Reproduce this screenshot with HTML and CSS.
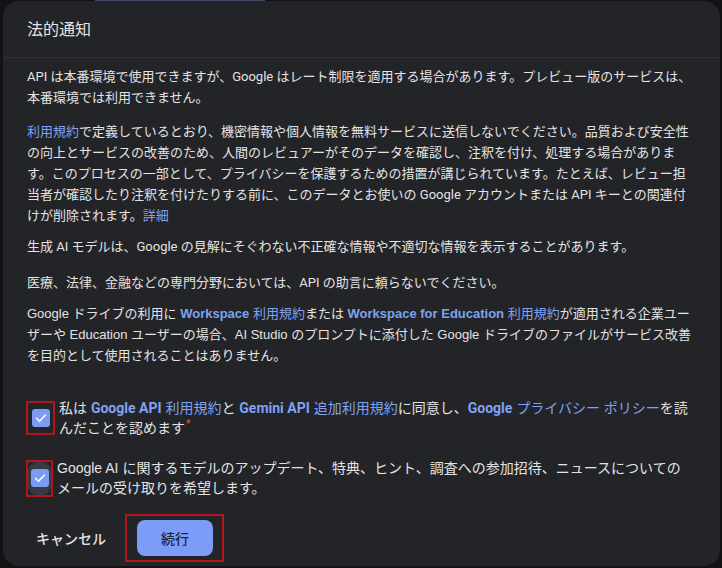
FILE: index.html
```html
<!DOCTYPE html>
<html lang="ja">
<head>
    <meta charset="UTF-8">
    <meta name="viewport" content="width=device-width, initial-scale=1.0">
    <title>法的通知</title>
    <link rel="stylesheet" href="styles.css">
</head>
<body>
    <div class="dialog">
        <!-- Cabecera -->
        <div class="dialog-header">
            <h2>法的通知</h2>
        </div>

        <!-- Contenido -->
        <div class="dialog-body">
            <p>API は本番環境で使用できますが、Google はレート制限を適用する場合があります。プレビュー版のサービスは、本番環境では利用できません。</p>
            <p class="p-terms"><a href="#">利用規約</a>で定義しているとおり、機密情報や個人情報を無料サービスに送信しないでください。品質および安全性の向上とサービスの改善のため、人間のレビュアーがそのデータを確認し、注釈を付け、処理する場合があります。このプロセスの一部として、プライバシーを保護するための措置が講じられています。たとえば、レビュー担当者が確認したり注釈を付けたりする前に、このデータとお使いの Google アカウントまたは API キーとの関連付けが削除されます。<a href="#">詳細</a></p>
            <p class="p-models">生成 AI モデルは、Google の見解にそぐわない不正確な情報や不適切な情報を表示することがあります。</p>
            <p class="p-advice">医療、法律、金融などの専門分野においては、API の助言に頼らないでください。</p>
            <p class="p-drive">Google ドライブの利用に <a href="#"><b>Workspace</b> 利用規約</a>または <a href="#"><b>Workspace for Education</b> 利用規約</a>が適用される企業ユーザーや Education ユーザーの場合、AI Studio のプロンプトに添付した Google ドライブのファイルがサービス改善を目的として使用されることはありません。</p>

            <div class="consents">
                <label class="consent wide">
                    <span class="cb-frame">
                        <span class="cb-layer">
                            <span class="checkbox">
                                <svg width="14" height="14" viewBox="0 0 24 24"><path d="M4.5 12.5l5 5 10-10.5" fill="none" stroke="#fff" stroke-width="2.6" stroke-linecap="round" stroke-linejoin="round"/></svg>
                            </span>
                        </span>
                    </span>
                    <span class="consent-text">私は <a href="#"><b>Google API</b> 利用規約</a>と <a href="#"><b>Gemini API</b> 追加利用規約</a>に同意し、<a href="#"><b>Google</b> プライバシー ポリシー</a>を読んだことを認めます<span class="req">*</span></span>
                </label>

                <label class="consent">
                    <span class="cb-frame tall">
                        <span class="cb-layer hover">
                            <span class="checkbox">
                                <svg width="14" height="14" viewBox="0 0 24 24"><path d="M4.5 12.5l5 5 10-10.5" fill="none" stroke="#fff" stroke-width="2.6" stroke-linecap="round" stroke-linejoin="round"/></svg>
                            </span>
                        </span>
                    </span>
                    <span class="consent-text">Google AI に関するモデルのアップデート、特典、ヒント、調査への参加招待、ニュースについてのメールの受け取りを希望します。</span>
                </label>
            </div>
        </div>

        <!-- Botones -->
        <div class="dialog-actions">
            <button type="button" class="text-btn">キャンセル</button>
            <span class="btn-frame">
                <button type="button" class="primary-btn">続行</button>
            </span>
        </div>
    </div>
</body>
</html>
```

FILE: styles.css
```css
/* General */
* {
    box-sizing: border-box;
}

body {
    margin: 0;
    height: 568px;
    overflow: hidden;
    font-family: Roboto, "Noto Sans CJK JP", sans-serif;
    color: #e3e3e3;
    background: linear-gradient(#3c4864, #3c4864) 95px 0 / 170px 2px no-repeat, #121315;
}

a {
    color: #7fa2f2;
    text-decoration: none;
}

a b {
    font-family: Roboto, "Noto Sans CJK JP", sans-serif;
    font-weight: 700;
}

/* Dialogo */
.dialog {
    margin: 1px 2px 0 3px;
    height: 565px;
    background: #232428;
    border-radius: 16px;
    display: flex;
    flex-direction: column;
}

.dialog-header {
    height: 57px;
    padding: 0 24px 3px;
    border-bottom: 1px solid #303236;
    display: flex;
    align-items: center;
}

.dialog-header h2 {
    margin: 0;
    font-size: 16px;
    font-weight: 400;
}

.dialog-body {
    padding: 8px 26px 0 24px;
}

.dialog-body p {
    margin: 0 0 13px;
    font-size: 13px;
    line-height: 21px;
}

.dialog-body .p-terms {
    margin-bottom: 10px;
}

.dialog-body .p-models {
    margin-bottom: 15px;
}

.dialog-body .p-advice {
    margin-bottom: 10px;
}

.dialog-body .p-drive {
    padding-right: 3px;
    font-family: "Liberation Sans", "Noto Sans CJK JP", sans-serif;
}

.p-drive a b {
    font-family: inherit;
}

/* Casillas */
.consents {
    margin-top: 22px;
}

.consent {
    display: flex;
    align-items: center;
    min-height: 60px;
    padding: 9px 0;
    font-family: "Liberation Sans", "Noto Sans CJK JP", sans-serif;
    font-size: 14px;
    line-height: 20.5px;
}

.consent.wide {
    margin-right: -3px;
}

.cb-frame {
    flex-shrink: 0;
    width: 29px;
    height: 34px;
    margin-left: -1px;
    margin-right: 4px;
    border: 2px solid #b3151c;
    display: flex;
    align-items: center;
    justify-content: center;
}

.cb-frame.tall {
    width: 27px;
    height: 37px;
}

.cb-layer {
    width: 100%;
    height: 100%;
    display: flex;
    align-items: center;
    justify-content: center;
    border-radius: 9px;
}

.cb-layer.hover {
    background: #383a41;
}

.checkbox {
    width: 18px;
    height: 18px;
    border-radius: 3px;
    background: #7c9cf4;
    display: flex;
    align-items: center;
    justify-content: center;
}

.req {
    color: #e8534b;
    font-size: 12px;
    line-height: 0;
    vertical-align: 5px;
    margin-left: 1px;
}

/* Botones */
.dialog-actions {
    margin-top: auto;
    padding: 0 24px 4px;
    display: flex;
    align-items: center;
}

.text-btn {
    background: none;
    border: none;
    padding: 0 9px;
    margin-right: 10px;
    height: 36px;
    font-family: inherit;
    font-size: 14px;
    font-weight: 500;
    color: #e3e3e3;
    cursor: pointer;
}

.btn-frame {
    border: 2px solid #b3151c;
    padding: 4px 9px 4px 10px;
}

.primary-btn {
    display: block;
    width: 76px;
    height: 36px;
    border: none;
    border-radius: 8px;
    background: #7d9cf8;
    color: #1b2541;
    font-family: inherit;
    font-size: 14px;
    font-weight: 500;
    cursor: pointer;
}
```
